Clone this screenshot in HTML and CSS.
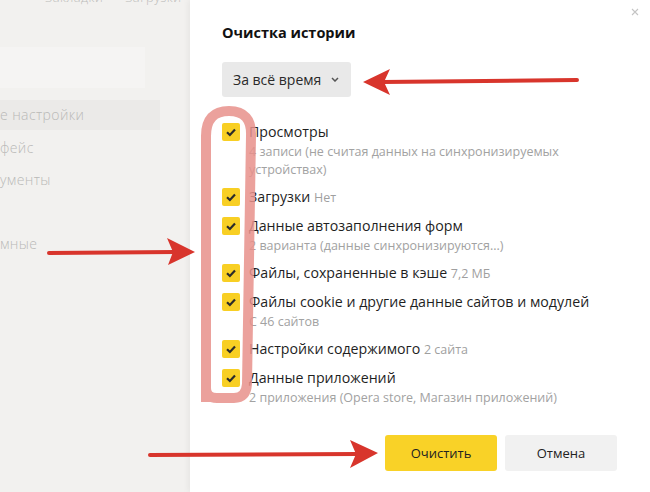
FILE: index.html
```html
<!DOCTYPE html>
<html lang="ru">
<head>
    <meta charset="UTF-8">
    <title>Очистка истории</title>
    <link rel="stylesheet" href="styles.css">
</head>
<body>
    <div class="page">
        <aside class="sidebar">
            <nav class="top-nav"><span>Закладки</span><span>Загрузки</span></nav>
            <div class="search"></div>
            <ul class="menu">
                <li class="active">е настройки</li>
                <li>фейс</li>
                <li>ументы</li>
                <li></li>
                <li>мные</li>
            </ul>
        </aside>

        <section class="dialog">
            <span class="close">
                <svg width="8" height="8" viewBox="0 0 8 8"><path d="M1 1L7 7M7 1L1 7" stroke="#c4c4c4" stroke-width="1.1"/></svg>
            </span>
            <h2 class="title">Очистка истории</h2>
            <div class="select">
                За всё время
                <svg width="8" height="5" viewBox="0 0 8 5"><path d="M1 1L4 4L7 1" fill="none" stroke="#555" stroke-width="1.5"/></svg>
            </div>

            <ul class="options">
                <li class="option">
                    <span class="check"><svg width="18" height="18" viewBox="0 0 18 18"><path d="M5 9.2L7.9 12L13 6.6" fill="none" stroke="#2b2b2b" stroke-width="2.2"/></svg></span>
                    <div>
                        <div class="label">Просмотры</div>
                        <div class="note">4 записи (не считая данных на синхронизируемых устройствах)</div>
                    </div>
                </li>
                <li class="option">
                    <span class="check"><svg width="18" height="18" viewBox="0 0 18 18"><path d="M5 9.2L7.9 12L13 6.6" fill="none" stroke="#2b2b2b" stroke-width="2.2"/></svg></span>
                    <div>
                        <div class="label">Загрузки <span class="extra">Нет</span></div>
                    </div>
                </li>
                <li class="option">
                    <span class="check"><svg width="18" height="18" viewBox="0 0 18 18"><path d="M5 9.2L7.9 12L13 6.6" fill="none" stroke="#2b2b2b" stroke-width="2.2"/></svg></span>
                    <div>
                        <div class="label">Данные автозаполнения форм</div>
                        <div class="note">2 варианта (данные синхронизируются...)</div>
                    </div>
                </li>
                <li class="option">
                    <span class="check"><svg width="18" height="18" viewBox="0 0 18 18"><path d="M5 9.2L7.9 12L13 6.6" fill="none" stroke="#2b2b2b" stroke-width="2.2"/></svg></span>
                    <div>
                        <div class="label">Файлы, сохраненные в кэше <span class="extra">7,2 МБ</span></div>
                    </div>
                </li>
                <li class="option">
                    <span class="check"><svg width="18" height="18" viewBox="0 0 18 18"><path d="M5 9.2L7.9 12L13 6.6" fill="none" stroke="#2b2b2b" stroke-width="2.2"/></svg></span>
                    <div>
                        <div class="label">Файлы cookie и другие данные сайтов и модулей</div>
                        <div class="note">С 46 сайтов</div>
                    </div>
                </li>
                <li class="option">
                    <span class="check"><svg width="18" height="18" viewBox="0 0 18 18"><path d="M5 9.2L7.9 12L13 6.6" fill="none" stroke="#2b2b2b" stroke-width="2.2"/></svg></span>
                    <div>
                        <div class="label">Настройки содержимого <span class="extra">2 сайта</span></div>
                    </div>
                </li>
                <li class="option">
                    <span class="check"><svg width="18" height="18" viewBox="0 0 18 18"><path d="M5 9.2L7.9 12L13 6.6" fill="none" stroke="#2b2b2b" stroke-width="2.2"/></svg></span>
                    <div>
                        <div class="label">Данные приложений</div>
                        <div class="note">2 приложения (Opera store, Магазин приложений)</div>
                    </div>
                </li>
            </ul>

            <div class="actions">
                <button class="btn btn-primary">Очистить</button>
                <button class="btn">Отмена</button>
            </div>
        </section>
    </div>

    <!-- hand-drawn marks on top of the screenshot -->
    <svg class="marks" width="650" height="492" viewBox="0 0 650 492">
        <path d="M206 402 L206 136 Q206 111 229 111 Q252 111 251 136 L247 384 Q246 398 234 398 L217 398 Q206 398 206 388"
              fill="none" stroke="#e8908b" stroke-width="10" stroke-linejoin="round" opacity="0.85"/>
        <g fill="#d8352c" stroke="#d8352c">
            <path d="M577 80 L382 82" stroke-width="4" stroke-linecap="round"/>
            <path d="M363 82 L390 69 L384 82 L390 95 Z" stroke="none"/>

            <path d="M49 253 L175 252" stroke-width="4" stroke-linecap="round"/>
            <path d="M195 252 L167 238 L173 252 L168 265 Z" stroke="none"/>

            <path d="M150 455 L358 454" stroke-width="4" stroke-linecap="round"/>
            <path d="M378 453 L350 440 L356 454 L350 468 Z" stroke="none"/>
        </g>
    </svg>
</body>
</html>
```

FILE: styles.css
```css
* { box-sizing: border-box; }
body { margin: 0; font-family: "Open Sans", "Noto Sans", sans-serif; background: #f2f1ef; overflow: hidden; }
.page { display: flex; width: 650px; height: 492px; position: relative; }

.sidebar { width: 190px; flex: none; color: #b9b9b7; font-weight: 300; letter-spacing: 0.4px; }
.top-nav { display: flex; gap: 22px; padding-left: 45px; margin-top: -11px; height: 17px; line-height: 17px; font-size: 13px; color: #bdbdbb; }
.search { margin-top: 41px; width: 145px; height: 41px; background: #f5f4f3; }
.menu { list-style: none; margin: 12px 0 0; padding: 0; width: 160px; font-size: 14px; }
.menu li { height: 32px; line-height: 32px; }
.menu li.active { background: #ebeae8; height: 30px; line-height: 30px; margin-bottom: 2px; }

.dialog { flex: 1; position: relative; background: #fff; padding: 23px 33px 0 32px; box-shadow: -2px 0 6px rgba(0, 0, 0, 0.05); }
.close { position: absolute; top: 8px; right: 11px; width: 8px; height: 8px; }
.close svg { display: block; }
.title { margin: 0; font-size: 14.5px; line-height: 20px; font-weight: 700; color: #111; }

.select { margin-top: 19px; display: inline-flex; align-items: center; gap: 10px; height: 35px; padding: 0 12px 0 11px; background: #e9e9e9; border-radius: 3px; font-size: 14px; color: #2a2a2a; }

.options { list-style: none; margin: 25px 0 0; padding: 0; }
.option { display: flex; gap: 9px; margin-bottom: 8px; }
.check { flex: none; width: 18px; height: 18px; margin-top: 1px; background: #f8cf24; border-radius: 2px; }
.check svg { display: block; }
.label { font-size: 14.2px; line-height: 20px; color: #1f1f1f; }
.extra { font-size: 12.5px; color: #9f9f9f; }
.note { margin-top: 1px; font-size: 12.5px; line-height: 18px; color: #a2a2a2; }

.actions { display: flex; justify-content: flex-end; gap: 8px; margin-top: 28px; }
.btn { width: 112px; height: 36px; border: none; border-radius: 3px; background: #f1f1f1; font-family: inherit; font-size: 13px; color: #222; }
.btn-primary { background: #f9d227; }

.marks { position: absolute; left: 0; top: 0; pointer-events: none; }
```
